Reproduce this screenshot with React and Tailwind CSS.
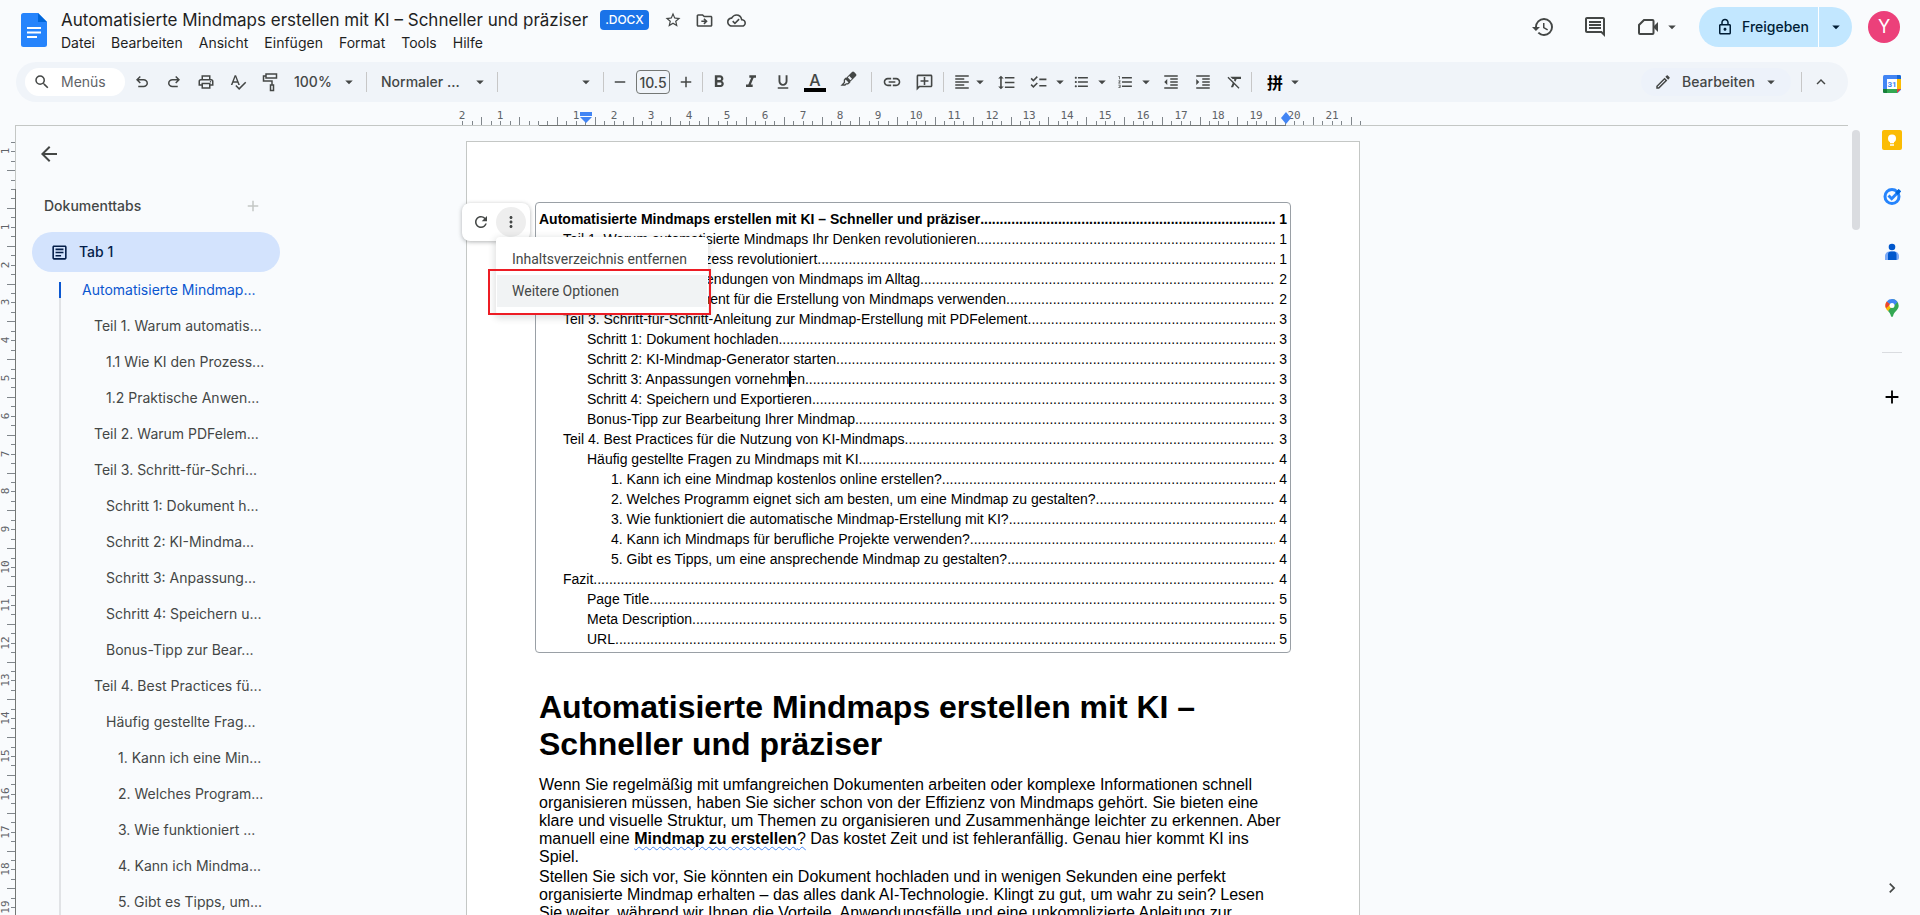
import React from 'react';
import {
  MdAdd,
  MdArrowBack,
  MdArrowDropDown,
  MdChecklist,
  MdChevronRight,
  MdFormatAlignLeft,
  MdFormatBold,
  MdFormatClear,
  MdFormatIndentDecrease,
  MdFormatIndentIncrease,
  MdFormatItalic,
  MdFormatLineSpacing,
  MdFormatListBulleted,
  MdFormatListNumbered,
  MdFormatUnderlined,
  MdKeyboardArrowUp,
  MdLink,
  MdMoreVert,
  MdOutlineAddComment,
  MdOutlineArticle,
  MdOutlineCloudDone,
  MdOutlineDriveFileMove,
  MdOutlineEdit,
  MdOutlineHistory,
  MdOutlineInsertComment,
  MdOutlineLock,
  MdOutlinePrint,
  MdRefresh,
  MdRemove,
  MdSearch,
  MdSpellcheck,
  MdStarBorder,
} from 'react-icons/md';

const menus = ['Datei', 'Bearbeiten', 'Ansicht', 'Einfügen', 'Format', 'Tools', 'Hilfe'];

const outline = [
  { text: 'Teil 1. Warum automatis...', level: 1 },
  { text: '1.1 Wie KI den Prozess...', level: 2 },
  { text: '1.2 Praktische Anwen...', level: 2 },
  { text: 'Teil 2. Warum PDFelem...', level: 1 },
  { text: 'Teil 3. Schritt-für-Schri...', level: 1 },
  { text: 'Schritt 1: Dokument h...', level: 2 },
  { text: 'Schritt 2: KI-Mindma...', level: 2 },
  { text: 'Schritt 3: Anpassung...', level: 2 },
  { text: 'Schritt 4: Speichern u...', level: 2 },
  { text: 'Bonus-Tipp zur Bear...', level: 2 },
  { text: 'Teil 4. Best Practices fü...', level: 1 },
  { text: 'Häufig gestellte Frag...', level: 2 },
  { text: '1. Kann ich eine Min...', level: 3 },
  { text: '2. Welches Program...', level: 3 },
  { text: '3. Wie funktioniert ...', level: 3 },
  { text: '4. Kann ich Mindma...', level: 3 },
  { text: '5. Gibt es Tipps, um...', level: 3 },
];

const outlineIndent = ['pl-[21px]', 'pl-[33px]', 'pl-[45px]', 'pl-[57px]'];

const toc = [
  { text: 'Automatisierte Mindmaps erstellen mit KI – Schneller und präziser', page: 1, level: 0 },
  { text: 'Teil 1. Warum automatisierte Mindmaps Ihr Denken revolutionieren', page: 1, level: 1 },
  { text: '1.1 Wie KI den Prozess revolutioniert', page: 1, level: 2 },
  { text: '1.2 Praktische Anwendungen von Mindmaps im Alltag', page: 2, level: 2 },
  { text: 'Teil 2. Warum PDFelement für die Erstellung von Mindmaps verwenden', page: 2, level: 1 },
  { text: 'Teil 3. Schritt-für-Schritt-Anleitung zur Mindmap-Erstellung mit PDFelement', page: 3, level: 1 },
  { text: 'Schritt 1: Dokument hochladen', page: 3, level: 2 },
  { text: 'Schritt 2: KI-Mindmap-Generator starten', page: 3, level: 2 },
  { text: 'Schritt 3: Anpassungen vornehm', rest: 'en', page: 3, level: 2 },
  { text: 'Schritt 4: Speichern und Exportieren', page: 3, level: 2 },
  { text: 'Bonus-Tipp zur Bearbeitung Ihrer Mindmap', page: 3, level: 2 },
  { text: 'Teil 4. Best Practices für die Nutzung von KI-Mindmaps', page: 3, level: 1 },
  { text: 'Häufig gestellte Fragen zu Mindmaps mit KI', page: 4, level: 2 },
  { text: '1. Kann ich eine Mindmap kostenlos online erstellen?', page: 4, level: 3 },
  { text: '2. Welches Programm eignet sich am besten, um eine Mindmap zu gestalten?', page: 4, level: 3 },
  { text: '3. Wie funktioniert die automatische Mindmap-Erstellung mit KI?', page: 4, level: 3 },
  { text: '4. Kann ich Mindmaps für berufliche Projekte verwenden?', page: 4, level: 3 },
  { text: '5. Gibt es Tipps, um eine ansprechende Mindmap zu gestalten?', page: 4, level: 3 },
  { text: 'Fazit', page: 4, level: 1 },
  { text: 'Page Title', page: 5, level: 2 },
  { text: 'Meta Description', page: 5, level: 2 },
  { text: 'URL', page: 5, level: 2 },
];

const tocIndent = ['font-bold', 'pl-6', 'pl-12', 'pl-[72px]'];

const CM = 37.8;

function IconButton({ label, className = 'w-8', children }) {
  return (
    <button type="button" aria-label={label} className={`flex h-7 shrink-0 items-center justify-center ${className}`}>
      {children}
    </button>
  );
}

function MenuButton({ label, gap = 'gap-[3px]', className = 'w-11 pl-1.5', children }) {
  return (
    <button type="button" aria-label={label} className={`flex h-7 shrink-0 items-center ${gap} ${className}`}>
      {children}
      <MdArrowDropDown size={18} className="shrink-0" />
    </button>
  );
}

function Select({ label, value, className }) {
  return (
    <div className={`relative flex h-7 shrink-0 items-center ${className}`}>
      <select aria-label={label} className="h-7 w-full appearance-none bg-transparent text-sm font-medium outline-none">
        <option>{value}</option>
      </select>
      <MdArrowDropDown size={18} className="pointer-events-none absolute right-2" />
    </div>
  );
}

function Divider({ className = '' }) {
  return <div className={`h-5 w-px shrink-0 bg-[#c7c7c7] ${className}`} />;
}

function DocsLogo() {
  return (
    <svg width="26" height="34" viewBox="0 0 26 34">
      <path d="M2.500 0H17l9 9v22.500a2.500 2.500 0 0 1-2.500 2.500h-21A2.500 2.500 0 0 1 0 31.500v-29A2.500 2.500 0 0 1 2.500 0z" fill="#2684fc" />
      <path d="M17 0l9 9h-9z" fill="#0066da" />
      <path d="M6 14h14v2H6zM6 18.500h14v2H6zM6 23h10v2H6z" fill="#fff" />
    </svg>
  );
}

function UndoIcon({ className }) {
  return (
    <svg width="18" height="18" viewBox="0 0 24 24" fill="currentColor" className={className}>
      <path d="M7 19v-2h7.100q1.575 0 2.738-1T18 13.500 16.838 11 14.100 10H7.800l2.600 2.600L9 14 4 9l5-5 1.400 1.400L7.800 8h6.300q2.425 0 4.163 1.575T20 13.500t-1.737 3.925T14.100 19z" />
    </svg>
  );
}

function PaintRollerIcon() {
  return (
    <svg width="18" height="20" viewBox="0 0 18 20" fill="none" stroke="currentColor" strokeWidth="1.500">
      <path d="M5 2h10.500v4H5zM5 4H2.500v5H11v4M9.500 13h3v5.500h-3z" />
    </svg>
  );
}

function HighlighterIcon() {
  return (
    <svg width="18" height="18" viewBox="0 0 18 18">
      <path d="M5.500 8.500l4 4L16 6a1.500 1.500 0 0 0 0-2.100L14.100 2A1.500 1.500 0 0 0 12 2z" fill="currentColor" />
      <path d="M7.800 7.500l2.700 2.700 1.500-1.500L9.300 6z" fill="#f0f4f9" />
      <path d="M5.500 8.500l4 4-1.700 1.300H6.200L5 15H2l2.400-2.500V10z" fill="none" stroke="currentColor" strokeWidth="1.300" />
    </svg>
  );
}

function VideoIcon() {
  return (
    <svg width="22" height="20" viewBox="0 0 22 20">
      <path d="M7 3h8.500a1 1 0 0 1 1 1v12a1 1 0 0 1-1 1H3a1 1 0 0 1-1-1V8z" fill="none" stroke="currentColor" strokeWidth="2" />
      <path d="M16 10l5-5v10z" fill="currentColor" />
    </svg>
  );
}

function CalendarIcon() {
  return (
    <svg width="20" height="20" viewBox="0 0 20 20">
      <rect x="1" y="1" width="18" height="18" rx="1.500" fill="#4285f4" />
      <path d="M15 1h2.500A1.500 1.500 0 0 1 19 2.500V5h-4z" fill="#1967d2" />
      <path d="M15 5h4v10h-4z" fill="#fbbc04" />
      <path d="M5 15h10v4H5z" fill="#34a853" />
      <path d="M1 15h4v4H2.500A1.500 1.500 0 0 1 1 17.500z" fill="#188038" />
      <path d="M15 15h4l-4 4z" fill="#ea4335" />
      <path d="M19.500 15.200v4.300h-4.300z" fill="#f9fbfd" />
      <path d="M5 5h10v10H5z" fill="#fff" />
      <text x="10" y="13" textAnchor="middle" fontSize="8" fontWeight="700" fontFamily="Roboto, sans-serif" fill="#4285f4">31</text>
    </svg>
  );
}

function KeepIcon() {
  return (
    <svg width="20" height="20" viewBox="0 0 20 20">
      <rect width="20" height="20" rx="2" fill="#fbbc04" />
      <circle cx="10" cy="8.500" r="4" fill="#fff" />
      <path d="M8 11h4v2.300H8zM8 14.200h4v1.500H8z" fill="#fff" />
    </svg>
  );
}

function TasksIcon() {
  return (
    <svg width="20" height="20" viewBox="0 0 20 20" fill="none">
      <circle cx="10" cy="10.500" r="7" stroke="#2684fc" strokeWidth="3" />
      <path d="M6.500 9.500l3.200 3.200L18 4.300" stroke="#2684fc" strokeWidth="3" />
      <path d="M14.500 7.700l3.300-3.400" stroke="#0066da" strokeWidth="3.500" />
    </svg>
  );
}

function ContactsIcon() {
  return (
    <svg width="20" height="20" viewBox="0 0 20 20">
      <circle cx="10" cy="5" r="3.300" fill="#0057cc" />
      <path d="M3 18v-4a4.500 4.500 0 0 1 4.500-4.500h5A4.500 4.500 0 0 1 17 14v2a2 2 0 0 1-2 2z" fill="#7baaf7" />
      <path d="M6 18v-5.500a3 3 0 0 1 3-3h3.500a3 3 0 0 1 2 3V18z" fill="#0057cc" />
    </svg>
  );
}

function MapsIcon() {
  return (
    <svg width="20" height="20" viewBox="0 0 20 20">
      <path d="M10 1a6.700 6.700 0 0 1 6.700 6.700c0 4.300-5 6-5.700 10.600-.1.700-1.900.7-2 0-.4-2.400-1.700-3.900-3-5.300z" fill="#34a853" />
      <path d="M3.300 7.700c0 2.200 1.200 3.800 2.700 5.300l6-7-7-2.500c-1 1-1.700 2.500-1.700 4.200z" fill="#fbbc04" />
      <path d="M4.800 3.500a6.700 6.700 0 0 0-.8 6.700l4.500-4z" fill="#ea4335" />
      <path d="M4.800 3.500A6.700 6.700 0 0 1 15.500 4L11 9 8 6z" fill="#4285f4" />
      <circle cx="10" cy="7.600" r="2.500" fill="#fff" />
    </svg>
  );
}

function Header() {
  return (
    <header className="flex h-[62px] shrink-0 items-start justify-between pr-5 pl-[21px]">
      <div className="flex gap-3.5">
        <a href="#home" aria-label="Docs" className="mt-[13px]">
          <DocsLogo />
        </a>
        <div className="pt-1.5">
          <div className="flex h-7 items-center text-[#444746]">
            <h1 className="text-[17px] leading-7 text-[#1f1f1f]">
              Automatisierte Mindmaps erstellen mit KI – Schneller und präziser
            </h1>
            <span className="ml-3 flex h-5 items-center rounded bg-[#1a73e8] px-[5px] text-xs font-medium text-white">.DOCX</span>
            <div className="ml-2 flex items-center">
              <IconButton label="Markieren"><MdStarBorder size={18} /></IconButton>
              <IconButton label="Verschieben"><MdOutlineDriveFileMove size={19} /></IconButton>
              <IconButton label="Dokumentstatus"><MdOutlineCloudDone size={19} /></IconButton>
            </div>
          </div>
          <nav className="flex gap-4 text-sm leading-[18px] text-[#1f1f1f]">
            {menus.map((m) => (
              <button key={m} type="button">{m}</button>
            ))}
          </nav>
        </div>
      </div>

      <div className="flex items-center pt-[7px] text-[#444746]">
        <IconButton label="Versionsverlauf" className="mr-7"><MdOutlineHistory size={24} /></IconButton>
        <IconButton label="Kommentare" className="mr-[30px]"><MdOutlineInsertComment size={24} /></IconButton>
        <MenuButton label="Videoanruf" gap="gap-1" className="mr-[18px]"><VideoIcon /></MenuButton>
        <div className="flex h-10 overflow-hidden rounded-full bg-[#c2e7ff] text-[#001d35]">
          <button type="button" className="flex items-center gap-2 pr-[9px] pl-[17px] text-sm font-medium">
            <MdOutlineLock size={18} />
            Freigeben
          </button>
          <button type="button" aria-label="Freigabeoptionen" className="flex w-[34px] items-center justify-center border-l border-white">
            <MdArrowDropDown size={18} />
          </button>
        </div>
        <button type="button" className="ml-4 size-8 rounded-full bg-[#ec407a] text-lg text-white">Y</button>
      </div>
    </header>
  );
}

function Toolbar() {
  return (
    <div className="mx-4 flex h-10 shrink-0 items-center rounded-full bg-[#f0f4f9] pl-[9px] text-[#444746]">
      <label className="mr-px flex h-7 w-[100px] shrink-0 items-center gap-2.5 rounded-full bg-white pl-2">
        <MdSearch size={18} className="shrink-0" />
        <input aria-label="Menüs" placeholder="Menüs" className="w-full min-w-0 bg-transparent text-sm outline-none placeholder:text-[#5f6368]" />
      </label>
      <IconButton label="Rückgängig"><UndoIcon /></IconButton>
      <IconButton label="Wiederholen"><UndoIcon className="-scale-x-100" /></IconButton>
      <IconButton label="Drucken"><MdOutlinePrint size={18} /></IconButton>
      <IconButton label="Rechtschreibung"><MdSpellcheck size={18} /></IconButton>
      <IconButton label="Format übertragen"><PaintRollerIcon /></IconButton>
      <Select label="Zoom" value="100%" className="w-20 pl-2" />
      <Divider />
      <Select label="Formatvorlage" value="Normaler ..." className="w-[130px] pl-3.5" />
      <Divider />
      <Select label="Schriftart" value="" className="w-[105px]" />
      <Divider />
      <IconButton label="Kleiner"><MdRemove size={18} /></IconButton>
      <input aria-label="Schriftgröße" defaultValue="10.5" className="h-6 w-[34px] shrink-0 rounded border border-[#747775] bg-transparent text-center text-sm font-medium outline-none" />
      <IconButton label="Größer"><MdAdd size={18} /></IconButton>
      <Divider />
      <IconButton label="Fett"><MdFormatBold size={20} /></IconButton>
      <IconButton label="Kursiv"><MdFormatItalic size={20} /></IconButton>
      <IconButton label="Unterstrichen"><MdFormatUnderlined size={18} /></IconButton>
      <IconButton label="Textfarbe" className="w-8 flex-col">
        <span className="text-base leading-4 font-medium">A</span>
        <span className="h-1 w-[22px] bg-black" />
      </IconButton>
      <IconButton label="Markierungsfarbe" className="w-9 pb-1.5"><HighlighterIcon /></IconButton>
      <Divider className="mx-1" />
      <IconButton label="Link"><MdLink size={20} /></IconButton>
      <IconButton label="Kommentar"><MdOutlineAddComment size={19} className="-scale-x-100" /></IconButton>
      <Divider className="mx-[3px]" />
      <MenuButton label="Ausrichtung" gap="gap-0" className="w-[42px] pl-1.5"><MdFormatAlignLeft size={18} /></MenuButton>
      <IconButton label="Zeilenabstand" className="w-[34px]"><MdFormatLineSpacing size={19} /></IconButton>
      <MenuButton label="Checkliste"><MdChecklist size={19} className="shrink-0" /></MenuButton>
      <MenuButton label="Aufzählung"><MdFormatListBulleted size={18} /></MenuButton>
      <MenuButton label="Nummerierung"><MdFormatListNumbered size={18} /></MenuButton>
      <IconButton label="Einzug verkleinern"><MdFormatIndentDecrease size={18} /></IconButton>
      <IconButton label="Einzug vergrößern"><MdFormatIndentIncrease size={18} /></IconButton>
      <IconButton label="Formatierung löschen"><MdFormatClear size={18} /></IconButton>
      <Divider className="mr-[3px]" />
      <MenuButton label="Eingabetools" className="w-[60px] pl-3">
        <span className="font-['Noto_Sans_CJK_SC',sans-serif] text-base leading-4 font-bold text-black">拼</span>
      </MenuButton>
      <div className="ml-auto flex items-center pr-2">
        <button type="button" className="mr-2.5 flex h-7 w-[150px] items-center rounded-full bg-[#edf2fa] pl-[13px] text-sm font-medium">
          <MdOutlineEdit size={18} />
          <span className="ml-2.5">Bearbeiten</span>
          <MdArrowDropDown size={18} className="mr-[11px] ml-auto" />
        </button>
        <Divider />
        <IconButton label="Menüs ausblenden" className="w-[38px]"><MdKeyboardArrowUp size={18} /></IconButton>
      </div>
    </div>
  );
}

function HorizontalRuler() {
  const zero = 538;
  const ticks = Array.from({ length: 96 }, (_, i) => i - 8);
  const labels = Array.from({ length: 24 }, (_, i) => i - 2).filter((n) => n !== 0);
  return (
    <svg className="mr-4 block h-6 shrink-0" width="calc(100% - 16px)" height="24">
      <line x1="15" x2="100%" y1="23.500" y2="23.500" stroke="#c4c7c5" />
      <line x1="539" x2="1286" y1="23.500" y2="23.500" stroke="#747775" />
      {ticks.map((t) => {
        const x = Math.round(zero + (t * CM) / 4) + 0.5;
        return <line key={t} x1={x} x2={x} y1={Math.abs(t % 4) === 2 ? 15 : 19} y2="23" stroke="#80868b" />;
      })}
      {labels.map((n) => (
        <text key={n} x={Math.round(zero + n * CM)} y="17" textAnchor="middle" fontSize="11" fill="#5f6368" className="font-['DejaVu_Sans_Mono',monospace]">
          {Math.abs(n)}
        </text>
      ))}
      <path d="M580 10h12v4h-12zM580 15h12l-6 6z" fill="#4285f4" />
      <path d="M1286 10l5 6-5 6-5-6z" fill="#4285f4" />
    </svg>
  );
}

function VerticalRuler() {
  const zero = 63;
  const ticks = Array.from({ length: 110 }, (_, i) => i - 5);
  const labels = [-1, ...Array.from({ length: 19 }, (_, i) => i + 1)];
  return (
    <svg className="block h-full w-4 shrink-0">
      <line x1="15.500" x2="15.500" y1="0" y2="63" stroke="#c4c7c5" />
      <line x1="15.500" x2="15.500" y1="63" y2="100%" stroke="#747775" />
      {ticks.map((t) => {
        const y = Math.round(zero + (t * CM) / 4) + 0.5;
        return <line key={t} x1={Math.abs(t % 4) === 2 ? 7 : 11} x2="15" y1={y} y2={y} stroke="#80868b" />;
      })}
      {labels.map((n) => {
        const y = Math.round(zero + n * CM);
        return (
          <text key={n} x="9" y={y} textAnchor="middle" fontSize="11" fill="#5f6368" transform={`rotate(-90 9 ${y})`} className="font-['DejaVu_Sans_Mono',monospace]">
            {Math.abs(n)}
          </text>
        );
      })}
    </svg>
  );
}

function Sidebar() {
  return (
    <aside className="w-[264px] shrink-0 pl-4 text-sm text-[#444746]">
      <button type="button" aria-label="Zurück" className="mt-4 ml-[5px] flex h-6 items-center">
        <MdArrowBack size={24} />
      </button>
      <div className="mt-7 flex h-6 items-center justify-between pr-[18px] pl-3">
        <h2 className="font-medium">Dokumenttabs</h2>
        <button type="button" aria-label="Tab hinzufügen" className="text-[#c4c7c5]">
          <MdAdd size={18} />
        </button>
      </div>
      <button type="button" className="mt-3.5 flex h-10 w-full items-center gap-2.5 rounded-full bg-[#d3e3fd] pl-[18px] font-medium text-[#041e49]">
        <MdOutlineArticle size={19} />
        Tab 1
      </button>
      <ul className="mt-2.5 ml-[27px] border-l-2 border-[#e1e3e6]">
        <li className="-ml-0.5 h-4 border-l-2 border-[#0b57d0] pl-[21px] leading-4 text-[#0b57d0]">
          <a href="#top">Automatisierte Mindmap...</a>
        </li>
        {outline.map((o) => (
          <li key={o.text} className={`pt-5 leading-4 whitespace-nowrap ${outlineIndent[o.level]}`}>
            <a href="#section">{o.text}</a>
          </li>
        ))}
        <li className="h-8" />
      </ul>
    </aside>
  );
}

function TocMenu() {
  return (
    <div>
      <div className="absolute top-0 left-[-74px] flex h-[38px] w-[68px] items-center gap-1.5 rounded-lg bg-white pl-2.5 text-[#444746] shadow-[0_1px_4px_rgba(60,64,67,0.4)]">
        <button type="button" aria-label="Aktualisieren"><MdRefresh size={18} /></button>
        <button type="button" aria-label="Weitere Aktionen" className="flex size-[30px] items-center justify-center rounded-full bg-[#eeeeee]">
          <MdMoreVert size={18} />
        </button>
      </div>
      <div className="absolute top-[34px] left-[-40px] flex w-[212px] flex-col rounded bg-white px-px pt-1.5 pb-2 font-[Roboto,sans-serif] text-sm text-[#444746] shadow-[0_2px_6px_2px_rgba(60,64,67,0.15)]">
        <button type="button" className="h-8 pl-[15px] text-left">Inhaltsverzeichnis entfernen</button>
        <button type="button" className="h-8 bg-[#f1f3f4] pl-[15px] text-left">Weitere Optionen</button>
      </div>
      <div className="pointer-events-none absolute top-[66px] left-[-48px] h-[46px] w-[223px] border-2 border-[#ed1c24]" />
    </div>
  );
}

function TocRow({ item }) {
  return (
    <li className={`flex ${tocIndent[item.level]}`}>
      <a href="#section" className="shrink-0">
        {item.text}
        {item.rest && <span className="relative before:absolute before:top-0 before:left-0 before:h-4 before:w-0.5 before:bg-black">{item.rest}</span>}
      </a>
      <span aria-hidden="true" className="w-0 flex-1 overflow-hidden">{'.'.repeat(190)}</span>
      <span className="pl-1">{item.page}</span>
    </li>
  );
}

function Page() {
  return (
    <article className="mt-[15px] ml-[186px] w-[894px] shrink-0 border border-[#c4c7c5] bg-white px-[72px] pt-[60px] pb-24 font-['Liberation_Sans',Arial,sans-serif] text-black">
      <div className="relative -mx-1 rounded border border-[#9aa0a6] px-[3px] pt-1.5 pb-[3px]">
        <ul className="text-sm leading-5">
          {toc.map((item) => (
            <TocRow key={item.text} item={item} />
          ))}
        </ul>
        <TocMenu />
      </div>
      <h1 className="mt-9 text-[32px] leading-[37px] font-bold">
        Automatisierte Mindmaps erstellen mit KI – Schneller und präziser
      </h1>
      <div className="mt-[13px] space-y-0.5 text-base leading-[18px]">
        <p>
          Wenn Sie regelmäßig mit umfangreichen Dokumenten arbeiten oder komplexe Informationen schnell organisieren
          müssen, haben Sie sicher schon von der Effizienz von Mindmaps gehört. Sie bieten eine klare und visuelle
          Struktur, um Themen zu organisieren und Zusammenhänge leichter zu erkennen. Aber manuell eine{' '}
          <span className="underline decoration-[#4285f4] decoration-wavy decoration-1 underline-offset-2">
            <b>Mindmap zu erstellen</b>?
          </span>{' '}
          Das kostet Zeit und ist fehleranfällig. Genau hier kommt KI ins Spiel.
        </p>
        <p>
          Stellen Sie sich vor, Sie könnten ein Dokument hochladen und in wenigen Sekunden eine perfekt organisierte
          Mindmap erhalten – das alles dank AI-Technologie. Klingt zu gut, um wahr zu sein? Lesen Sie weiter, während
          wir Ihnen die Vorteile, Anwendungsfälle und eine unkomplizierte Anleitung zur
        </p>
      </div>
    </article>
  );
}

function SideRail() {
  return (
    <aside className="flex w-14 shrink-0 flex-col items-center pt-3">
      <div className="flex flex-col gap-9">
        <button type="button" aria-label="Kalender"><CalendarIcon /></button>
        <button type="button" aria-label="Notizen"><KeepIcon /></button>
        <button type="button" aria-label="Aufgaben"><TasksIcon /></button>
        <button type="button" aria-label="Kontakte"><ContactsIcon /></button>
        <button type="button" aria-label="Karten"><MapsIcon /></button>
      </div>
      <div className="mt-[34px] h-px w-5 bg-[#dadce0]" />
      <button type="button" aria-label="Add-ons" className="mt-[33px]"><MdAdd size={22} /></button>
      <button type="button" aria-label="Seitenleiste ausblenden" className="mt-auto mb-[17px] text-[#444746]">
        <MdChevronRight size={20} />
      </button>
    </aside>
  );
}

export default function App() {
  return (
    <div className="flex h-screen flex-col overflow-hidden bg-[#f9fbfd] font-[Inter,Roboto,sans-serif]">
      <Header />
      <div className="flex min-h-0 flex-1">
        <div className="flex min-w-0 flex-1 flex-col">
          <Toolbar />
          <HorizontalRuler />
          <div className="flex min-h-0 flex-1">
            <VerticalRuler />
            <Sidebar />
            <main className="flex min-w-0 flex-1 items-start overflow-hidden">
              <Page />
            </main>
            <div className="w-4 shrink-0 px-1 pt-1">
              <div className="h-[100px] rounded-full bg-[#dadce0]" />
            </div>
          </div>
        </div>
        <SideRail />
      </div>
    </div>
  );
}
